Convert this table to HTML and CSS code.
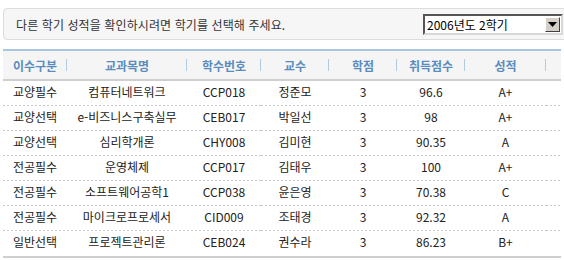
FILE: index.html
```html
<!DOCTYPE html>
<html lang="ko">
<head>
<meta charset="utf-8">
<link rel="stylesheet" href="styles.css">
</head>
<body>
<div class="page">
  <div class="notice">
    <p class="notice-text">다른 학기 성적을 확인하시려면 학기를 선택해 주세요.</p>
    <div class="select">
      <span class="select-value">2006년도 2학기</span>
      <span class="select-btn"><svg width="9" height="5" viewBox="0 0 9 5"><path d="M0 0h9L4.5 5z" fill="#000"/></svg></span>
    </div>
  </div>
  <table class="grades">
    <colgroup>
      <col style="width:64px"><col style="width:120px"><col style="width:74px"><col style="width:68px"><col style="width:68px"><col style="width:68px"><col style="width:81px"><col>
    </colgroup>
    <thead>
      <tr><th>이수구분</th><th>교과목명</th><th>학수번호</th><th>교수</th><th>학점</th><th>취득점수</th><th>성적</th><th class="spacer"></th></tr>
    </thead>
    <tbody>
      <tr><td>교양필수</td><td>컴퓨터네트워크</td><td>CCP018</td><td>정준모</td><td>3</td><td>96.6</td><td>A+</td><td></td></tr>
      <tr><td>교양선택</td><td>e-비즈니스구축실무</td><td>CEB017</td><td>박일선</td><td>3</td><td>98</td><td>A+</td><td></td></tr>
      <tr><td>교양선택</td><td>심리학개론</td><td>CHY008</td><td>김미현</td><td>3</td><td>90.35</td><td>A</td><td></td></tr>
      <tr><td>전공필수</td><td>운영체제</td><td>CCP017</td><td>김태우</td><td>3</td><td>100</td><td>A+</td><td></td></tr>
      <tr><td>전공필수</td><td>소프트웨어공학1</td><td>CCP038</td><td>윤은영</td><td>3</td><td>70.38</td><td>C</td><td></td></tr>
      <tr><td>전공필수</td><td>마이크로프로세서</td><td>CID009</td><td>조태경</td><td>3</td><td>92.32</td><td>A</td><td></td></tr>
      <tr><td>일반선택</td><td>프로젝트관리론</td><td>CEB024</td><td>권수라</td><td>3</td><td>86.23</td><td>B+</td><td></td></tr>
    </tbody>
  </table>
</div>
</body>
</html>
```
FILE: styles.css
```css
html, body {
  margin: 0;
  padding: 0;
  background: #fff;
  overflow: hidden;
}
body {
  font-family: "Noto Sans CJK KR", "DejaVu Sans", sans-serif;
  font-size: 12px;
  color: #222;
}
.page {
  padding: 8px 3px 0 3px;
  width: 558px;
}
.notice {
  display: flex;
  align-items: center;
  justify-content: space-between;
  height: 30px;
  margin-right: -20px;
  padding: 0 17px 0 12px;
  background: #f6f6f6;
  border: 1px solid #dcdcdc;
  border-radius: 4px;
}
.notice-text {
  margin: 0;
  font-size: 12px;
  color: #333;
  letter-spacing: 0.1px;
}
.select {
  display: flex;
  align-items: center;
  width: 134px;
  height: 15px;
  padding: 1px;
  background: #fff;
  border-style: solid;
  border-width: 2px;
  border-color: #555 #d8d8d8 #d8d8d8 #555;
}
.select-value {
  flex: 1;
  padding-left: 1px;
  font-size: 12px;
  line-height: 15px;
  color: #000;
}
.select-btn {
  display: flex;
  align-items: center;
  justify-content: center;
  width: 13px;
  height: 13px;
  background: #d4d0c8;
  border: 1px solid;
  border-color: #fff #404040 #404040 #fff;
}
.grades {
  width: 558px;
  margin-top: 9px;
  border-collapse: collapse;
  table-layout: fixed;
  border-top: 2px solid #a8c6de;
  border-bottom: 2px solid #cfcfcf;
}
.grades th {
  height: 28px;
  padding: 0;
  font-size: 12px;
  font-weight: bold;
  color: #5a8cbd;
  background: linear-gradient(#b3cbe0, #b3cbe0) no-repeat right 0 center / 1px 12px, #f5f5f5;
  border-bottom: 2px solid #cfcfcf;
  text-align: center;
}
.grades th.spacer {
  background: #f5f5f5;
}
.grades td {
  height: 21px;
  padding: 0 0 4px 0;
  text-align: center;
  white-space: nowrap;
  background: repeating-linear-gradient(to right, #c8c8c8 0 2px, transparent 2px 4px) no-repeat left bottom / 100% 1px;
}
.grades tbody tr:last-child td {
  background: none;
}
```
